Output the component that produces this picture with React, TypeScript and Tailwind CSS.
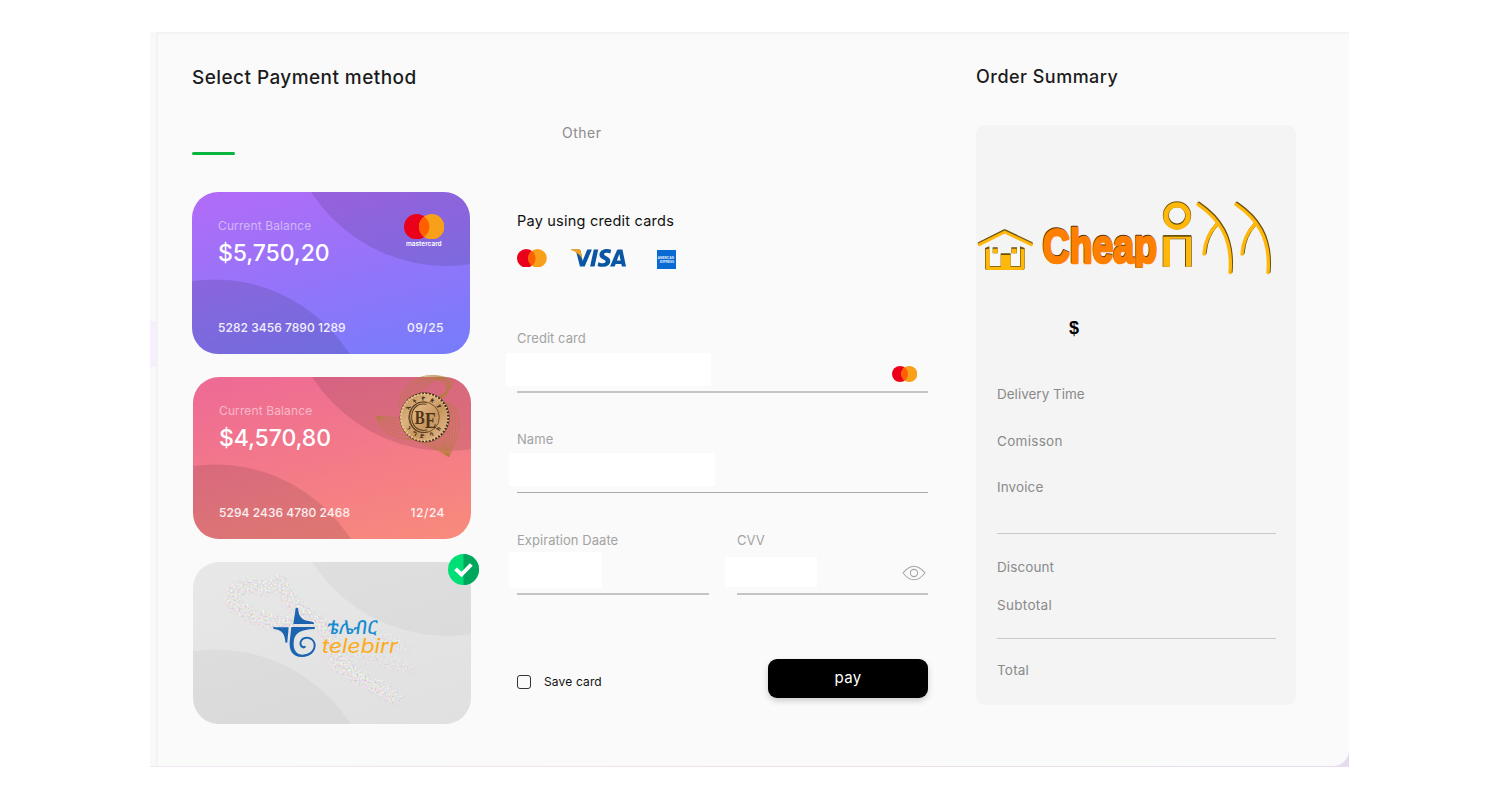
import React from "react";

type MarkProps = { r: number; gap: number };

function Mastercard({ r, gap }: MarkProps) {
  const w = r * 2 + gap;
  const h = r * 2;
  const half = gap / 2;
  const dy = Math.sqrt(r * r - half * half);
  const mid = w / 2;
  return (
    <svg width={w} height={h} viewBox={`0 0 ${w} ${h}`} className="block shrink-0">
      <circle cx={r} cy={r} r={r} fill="#eb001b" />
      <circle cx={r + gap} cy={r} r={r} fill="#f9a01b" />
      <path d={`M${mid} ${r - dy}A${r} ${r} 0 0 1 ${mid} ${r + dy}A${r} ${r} 0 0 1 ${mid} ${r - dy}Z`} fill="#ff5f00" />
    </svg>
  );
}

function Visa() {
  return (
    <svg width="55" height="18" viewBox="0 8.1 24 7.85" className="block">
      <path
        fill="#0a56a3"
        d="M9.112 8.262L5.97 15.758H3.92L2.374 9.775c-.094-.368-.175-.503-.461-.658C1.447 8.864.677 8.627 0 8.479l.046-.217h3.3a.904.904 0 01.894.764l.817 4.338 2.018-5.102zm8.033 5.049c.008-1.979-2.736-2.088-2.717-2.972.006-.269.262-.555.822-.628a3.66 3.66 0 011.913.336l.34-1.59a5.207 5.207 0 00-1.814-.333c-1.917 0-3.266 1.02-3.278 2.479-.012 1.079.963 1.68 1.698 2.04.756.367 1.01.603 1.006.931-.005.504-.602.725-1.16.734-.975.015-1.54-.263-1.992-.473l-.351 1.642c.453.208 1.289.39 2.156.398 2.037 0 3.37-1.006 3.377-2.564m5.061 2.447H24l-1.565-7.496h-1.656a.883.883 0 00-.826.55l-2.909 6.946h2.036l.405-1.12h2.488zm-2.163-2.656l1.02-2.815.588 2.815zm-8.16-4.84l-1.603 7.496H8.34l1.605-7.496z"
      />
      <path fill="#f9a01b" d="M0 8.5L.05 8.2H3.4A.9.9 0 0 1 4.25 9L4.95 12.7C4.3 11 2.4 9.2 0 8.5Z" />
    </svg>
  );
}

function Amex() {
  return (
    <svg width="19" height="19" viewBox="0 0 19 19" className="block">
      <rect width="19" height="19" fill="#0a6ad4" />
      <text x="0.8" y="9.3" fontSize="3.4" fontWeight="700" fill="#e6f1ff" textLength="16" lengthAdjust="spacingAndGlyphs" fontFamily="Liberation Sans, sans-serif">AMERICAN</text>
      <text x="3" y="13" fontSize="3.4" fontWeight="700" fill="#e6f1ff" textLength="14" lengthAdjust="spacingAndGlyphs" fontFamily="Liberation Sans, sans-serif">EXPRESS</text>
    </svg>
  );
}

function CardArcs({ opacity }: { opacity: number }) {
  return (
    <svg width="278" height="162" viewBox="0 0 278 162" className="absolute inset-0">
      <g fill="#000" fillOpacity={opacity}>
        <circle cx="255" cy="-88" r="162" />
        <circle cx="22" cy="248.5" r="161" />
      </g>
    </svg>
  );
}

function BankCoin() {
  const n = 7;
  const steps = Array.from({ length: n }, (_, i) => i / (n - 1));
  const teeth = Array.from({ length: 44 }, (_, i) => (i * 360) / 44);
  return (
    <svg width="84" height="84" viewBox="584 22 252 252" className="block overflow-visible">
      <defs>
        <linearGradient id="coin" x1="0" y1="0" x2="1" y2="1">
          <stop offset="0" stopColor="#b98a52" />
          <stop offset="0.35" stopColor="#dcb27d" />
          <stop offset="0.6" stopColor="#c7965f" />
          <stop offset="1" stopColor="#e6c091" />
        </linearGradient>
      </defs>
      <g fill="none" stroke="#b07f38" strokeWidth="1.9">
        {steps.map((t) => (
          <g key={t}>
            <path d={`M${658 + t * 62} ${122 - t * 30}C${652 + t * 60} ${60 + t * 2} ${710 + t * 55} ${20 + t * 26} ${770 - t * 4} ${27 + t * 12}S${840 - t * 10} ${62 + t * 4} ${752 + t * 34} ${100 - t * 4}`} />
            <path d={`M${760 + t * 50} ${88 + t * 24}C${800 + t * 42} ${120 + t * 10} ${760 + t * 88} ${190 + t * 10} 805 270`} />
            <path d={`M590 150C${640 - t * 40} ${148 + t * 44} ${650 - t * 20} ${160 + t * 54} ${680 + t * 20} ${150 + t * 70}`} />
            <path d={`M${684 + t * 90} ${214 - t * 10}C${720 + t * 60} ${226 - t * 10} ${765 + t * 22} ${244 - t * 14} 805 270`} />
          </g>
        ))}
      </g>
      <circle cx="733" cy="152" r="75" fill="#4a2f1b" />
      <circle cx="730" cy="152" r="71" fill="url(#coin)" />
      {teeth.map((a) => (
        <rect key={a} x="731" y="78" width="4" height="7" fill="#ecc995" transform={`rotate(${a} 733 152)`} />
      ))}
      <circle cx="731" cy="152" r="46" fill="none" stroke="#7a5029" strokeWidth="3" />
      <g fill="#3c2513" stroke="none" fontFamily="Noto Sans Ethiopic, Noto Sans, DejaVu Sans, sans-serif" fontWeight="700" fontSize="17">
        {[[-58, "ኢ"], [-30, "ት"], [-2, "ዮ"], [26, "ጵ"], [54, "ያ"]].map(([a, c]) => (
          <text key={c} x="731" y="102" textAnchor="middle" transform={`rotate(${a} 731 152)`}>{c}</text>
        ))}
        {[[54, "ን"], [30, "ግ"], [6, "ድ"], [-24, "ባ"], [-52, "ክ"]].map(([a, c]) => (
          <text key={c} x="731" y="214" textAnchor="middle" transform={`rotate(${a} 731 152)`}>{c}</text>
        ))}
      </g>
      <path d="M739 110C705 104 690 130 691 153S708 200 741 193" fill="none" stroke="#5c3a1c" strokeWidth="9" />
      <path d="M739 110C705 104 690 130 691 153S708 200 741 193" fill="none" stroke="#e8c08b" strokeWidth="2.5" />
      <g fontFamily="Liberation Serif, serif" fontWeight="700" fill="#4f3219">
        <text x="703" y="171" fontSize="58" textLength="30" lengthAdjust="spacingAndGlyphs">B</text>
        <text x="734" y="184" fontSize="70" textLength="34" lengthAdjust="spacingAndGlyphs">E</text>
      </g>
    </svg>
  );
}

function TelebirrLogo() {
  return (
    <svg width="130" height="55" viewBox="270 180 390 165" className="block overflow-visible">
      <g fill="#1c63b0">
        <path d="M347 189Q350 187 354 190C356 211 361 228 397 230Q402 231 402 237H340C342 219 346 203 347 189Z" />
        <path d="M280 246Q294 247 326 247L322 292Q318 296 316 290C314 267 308 256 282 252Q278 249 280 246Z" />
        <path d="M334 246H404Q407 249 403 252C362 254 350 262 343 280C337 304 343 329 367 329C389 329 401 315 401 301C401 286 389 280 379 281C367 282 363 291 365 299Q369 306 376 302L378 306Q371 314 363 307C354 297 359 276 379 275C395 274 407 287 407 301C406 322 389 337 365 336C337 335 327 315 329 290Z" />
      </g>
      <text x="436" y="266" fontSize="58" fontWeight="500" fill="#168bd1" textLength="150" lengthAdjust="spacingAndGlyphs" transform="translate(40 0) skewX(-8)" fontFamily="Noto Sans Ethiopic, Noto Sans, DejaVu Sans, sans-serif">ቴሌብር</text>
      <text x="425" y="324" fontSize="60" fontStyle="italic" fontWeight="400" fill="#fbac18" textLength="228" lengthAdjust="spacingAndGlyphs" fontFamily="Inter, sans-serif">telebirr</text>
    </svg>
  );
}

function Speckle() {
  return (
    <svg width="278" height="162" viewBox="0 0 278 162" className="absolute inset-0">
      <defs>
        <filter id="speckle" x="0" y="0" width="278" height="162" filterUnits="userSpaceOnUse" colorInterpolationFilters="sRGB">
          <feTurbulence type="fractalNoise" baseFrequency="0.5" numOctaves="2" seed="4" result="n" />
          <feColorMatrix in="n" values="0.45 0 0 0 0.67  0 0.45 0 0 0.66  0 0 0.45 0 0.66  0 0 0 0 0.85" result="c" />
          <feGaussianBlur in="SourceGraphic" stdDeviation="1.6" result="s" />
          <feDisplacementMap in="s" in2="n" scale="9" xChannelSelector="R" yChannelSelector="G" result="d" />
          <feComposite in="c" in2="d" operator="in" />
        </filter>
      </defs>
      <g filter="url(#speckle)" fill="none" stroke="#fff" strokeLinecap="round" strokeLinejoin="round">
        <path strokeWidth="15" d="M74 25C60 22 48 22 43 28S38 40 46 46S70 58 96 62" />
        <path strokeWidth="15" d="M86 20L101 42L133 66L146 102L170 118L202 134" />
        <path strokeWidth="13" strokeOpacity="0.6" d="M185 76L210 84M150 96L180 96L217 106" />
      </g>
    </svg>
  );
}

function CheckBadge() {
  return (
    <svg width="31" height="31" viewBox="0 0 31 31" className="block">
      <circle cx="15.5" cy="15.5" r="15.5" fill="#00df76" />
      <path d="M15.5 0A15.5 15.5 0 0 1 15.5 31Z" fill="#00a65c" />
      <path d="M7.5 14.8L13.5 20.5L23.3 10.5" fill="none" stroke="#fff" strokeWidth="3.9" />
    </svg>
  );
}

function CheapLogo() {
  const figure = "M685 42C745 83 790 140 781 247M742 101C715 130 705 160 703 191";
  const house = "M28 162L104 124L184 162";
  return (
    <svg width="302" height="76" viewBox="18 30 906 228" className="block">
      <defs>
        <clipPath id="wordmark">
          <rect x="200" y="90" width="380" height="143" />
        </clipPath>
      </defs>
      <g fill="none" stroke="#6b520c" strokeLinecap="round" strokeLinejoin="round">
        <path d={house} strokeWidth="9" transform="translate(0 -2)" />
        <path d={figure} strokeWidth="10" transform="translate(2 -2)" />
        <path d={figure} strokeWidth="10" transform="translate(116 -2)" />
        <circle cx="621" cy="76" r="33.5" strokeWidth="18" />
      </g>
      <path d="M578 230V139Q578 135 583 135H660Q665 135 665 139V230H645V148H598V230Z" fill="#6b520c" />
      <g fill="none" stroke="#ffb70a" strokeLinecap="round" strokeLinejoin="round">
        <path d={house} strokeWidth="9" transform="translate(0 2)" />
        <path d={figure} strokeWidth="10" transform="translate(-1 1)" />
        <path d={figure} strokeWidth="10" transform="translate(113 1)" />
        <circle cx="621" cy="78" r="33.5" strokeWidth="15" />
      </g>
      <path d="M580 230V140H663V230H648V146H600V230Z" fill="#ffb70a" />
      <path d="M45 174L58 169V228H92V190H122V228H150V169L164 174V234Q164 240 158 240H52Q45 240 45 234Z" fill="#6b520c" />
      <path d="M47 178L59 176V230H93V195H122V230H152V176L163 178V233Q163 240 156 240H54Q47 240 47 233Z" fill="#ffb70a" />
      <path d="M60 178H90V228H60ZM124 178H150V228H124Z" fill="#f8f8f8" />
      <path d="M68 172H83V190H68ZM124 172H141V190H124Z" fill="#6b520c" />
      <path d="M69 176H83V190H69ZM125 176H140V190H125Z" fill="#ffb70a" />
      <g clipPath="url(#wordmark)" fontFamily="Liberation Sans Narrow, Liberation Sans, sans-serif" fontWeight="700" fontSize="143" strokeLinejoin="round">
        <text x="217" y="215" fill="#57330b" stroke="#57330b" strokeWidth="8" textLength="343" lengthAdjust="spacingAndGlyphs">Cheap</text>
        <text x="218" y="218" fill="#ff8000" stroke="#ff8000" strokeWidth="8" textLength="343" lengthAdjust="spacingAndGlyphs">Cheap</text>
      </g>
    </svg>
  );
}

type BalanceProps = {
  amount: string;
  number: string;
  expiry: string;
  tone: string;
  arcs: number;
  children?: React.ReactNode;
};

function BalanceCard({ amount, number, expiry, tone, arcs, children }: BalanceProps) {
  return (
    <div className="relative h-[162px] w-[278px]">
      <div className={`relative h-full overflow-hidden rounded-[26px] ${tone}`}>
        <CardArcs opacity={arcs} />
        <div className="relative flex h-full flex-col pt-[27px] pr-[26px] pb-[18px] pl-[26px] text-white">
          <span className="text-[12px] leading-[14px] tracking-[0.12px] text-white/50">Current Balance</span>
          <span className="mt-[6px] text-[23px] font-medium leading-[28px] tracking-[-0.1px]">{amount}</span>
          <div className="mt-auto flex justify-between text-[12px] font-medium leading-[16px] text-white/90">
            <span className="tracking-[0.05px]">{number}</span>
            <span className="tracking-[0.5px]">{expiry}</span>
          </div>
        </div>
      </div>
      {children}
    </div>
  );
}

function Label({ children }: { children: React.ReactNode }) {
  return <div className="h-[18px] text-[13px] leading-[18px] tracking-[0.05px] text-[#a3a3a3]">{children}</div>;
}

export default function App() {
  return (
    <main className="h-[800px] w-[1500px] overflow-hidden bg-white pt-8 pl-[150px] font-['Inter',sans-serif]">
      <div className="flex h-[735px] w-[1199px] bg-gradient-to-r from-[#efe6f2] via-[#eee3e4] to-[#e5dcee]">
        <div className="h-[734px] w-[6px] bg-[#f9f9f9] pt-[289px]">
          <div className="h-[46px] bg-[#f6effd]" />
        </div>
        <div className="flex h-[734px] flex-1 rounded-br-[16px] border-t-2 border-l-2 border-[#f3f3f3] bg-[#fafafa]">
          <section className="ml-[34px] w-[279px] shrink-0 pt-[31px]">
            <h1 className="whitespace-nowrap text-[19px] font-medium leading-[26px] tracking-[0.43px] text-[#1c1c1c]">Select Payment method</h1>
            <div className="mt-[61px] h-[3px] w-[43px] rounded-full bg-[#0ab53f]" />
            <div className="mt-[37px] flex flex-col gap-[23px]">
              <BalanceCard amount="$5,750,20" number="5282 3456 7890 1289" expiry="09/25" arcs={0.11} tone="bg-[linear-gradient(165deg,#b06cf7_5%,#787cfb_95%)]">
                <div className="absolute top-[21.5px] right-[26px] flex flex-col items-center">
                  <Mastercard r={12.7} gap={15} />
                  <span className="mt-px text-[6.5px] font-semibold leading-[8px] text-white">mastercard</span>
                </div>
              </BalanceCard>
              <div className="pl-px">
                <BalanceCard amount="$4,570,80" number="5294 2436 4780 2468" expiry="12/24" arcs={0.1} tone="bg-[linear-gradient(165deg,#ee6b94_5%,#f8897d_95%)]">
                  <div className="absolute -top-[3px] left-[182px]">
                    <BankCoin />
                  </div>
                </BalanceCard>
              </div>
              <div className="relative ml-px h-[162px] w-[278px]">
                <div className="relative h-full overflow-hidden rounded-[26px] bg-[linear-gradient(165deg,#e8e8e8,#e0e0e0)]">
                  <CardArcs opacity={0.03} />
                  <Speckle />
                  <div className="relative pt-[43px] pl-[77px]">
                    <TelebirrLogo />
                  </div>
                </div>
                <div className="absolute -top-[8.5px] -right-[8px]">
                  <CheckBadge />
                </div>
              </div>
            </div>
          </section>

          <section className="ml-[46px] w-[411px] shrink-0 pt-[89px]">
            <div className="ml-[45px] text-[14px] leading-[20px] tracking-[0.5px] text-[#8c8c8c]">Other</div>
            <h2 className="mt-[67px] text-[14.5px] leading-[22px] tracking-[0.22px] text-[#111]">Pay using credit cards</h2>
            <div className="mt-[16px] flex h-[20px] items-center">
              <Mastercard r={9.3} gap={11.2} />
              <div className="ml-[24px]"><Visa /></div>
              <div className="ml-[31px] pt-[2px]"><Amex /></div>
            </div>

            <div className="mt-[61px]">
              <Label>Credit card</Label>
              <div className="mt-[6px] flex h-[40px] justify-between border-b-2 border-[#c4c4c4]">
                <div className="-ml-[11px] h-[33px] w-[205px] bg-white" />
                <div className="mt-[13px] mr-[11px]"><Mastercard r={8} gap={9.3} /></div>
              </div>
            </div>

            <div className="mt-[37px]">
              <Label>Name</Label>
              <div className="mt-[5px] h-[39.5px] border-b border-[#a9a9a9]">
                <div className="-ml-[8px] h-[33px] w-[206px] bg-white" />
              </div>
            </div>

            <div className="mt-[38px] flex justify-between">
              <div className="w-[192px]">
                <Label>Expiration Daate</Label>
                <div className="mt-[3px] h-[43px] border-b-2 border-[#c4c4c4]">
                  <div className="-ml-[8px] h-[36px] w-[93px] bg-white" />
                </div>
              </div>
              <div className="w-[191px]">
                <Label>CVV</Label>
                <div className="mt-[3px] flex h-[43px] justify-between border-b-2 border-[#c4c4c4] pt-[5px]">
                  <div className="-ml-[12px] h-[30px] w-[92px] bg-white" />
                  <svg width="24" height="16" viewBox="0 0 24 16" className="mt-[8px] mr-[2px] block" fill="none" stroke="#a6a6a6" strokeWidth="1.1">
                    <path d="M1 8C5 3 8.5 1.2 12 1.2S19 3 23 8C19 13 15.5 14.8 12 14.8S5 13 1 8Z" />
                    <circle cx="12" cy="8" r="3.6" />
                  </svg>
                </div>
              </div>
            </div>

            <div className="mt-[64px] flex items-center justify-between">
              <label className="flex items-center pt-[8px] text-[12px] leading-[18px] tracking-[0.15px] text-[#111]">
                <span className="mr-[13px] h-[14px] w-[14px] rounded-[3px] border-[1.5px] border-[#333]" />
                Save card
              </label>
              <button className="h-[39.5px] w-[160px] rounded-[9px] bg-black text-[15px] leading-[20px] tracking-[0.3px] text-white shadow-[0_3px_6px_rgba(0,0,0,0.18)]">pay</button>
            </div>
          </section>

          <section className="ml-[48px] w-[320px] shrink-0 pt-[30px]">
            <h2 className="text-[18px] font-medium leading-[26px] tracking-[0.48px] text-[#1c1c1c]">Order Summary</h2>
            <div className="mt-[35px] flex h-[580px] flex-col rounded-[9px] bg-[#f4f4f4] pt-[75px] text-[13.5px] leading-[20px] text-[#8a8a8a]">
              <CheapLogo />
              <div className="mt-[40px] ml-[93px] font-['Liberation_Sans',sans-serif] text-[18px] font-bold leading-[24px] text-black">$</div>
              <div className="mt-[44px] ml-[21px] flex w-[279px] flex-col">
                <div>Delivery Time</div>
                <div className="mt-[27px] tracking-[0.3px]">Comisson</div>
                <div className="mt-[26px] tracking-[0.1px]">Invoice</div>
                <div className="mt-[36px] border-t border-[#c9c9c9] pt-[23px] tracking-[0.1px]">Discount</div>
                <div className="mt-[18px] tracking-[0.3px]">Subtotal</div>
                <div className="mt-[23px] border-t border-[#c9c9c9] pt-[21px] tracking-[0.2px]">Total</div>
              </div>
            </div>
          </section>
        </div>
      </div>
    </main>
  );
}
